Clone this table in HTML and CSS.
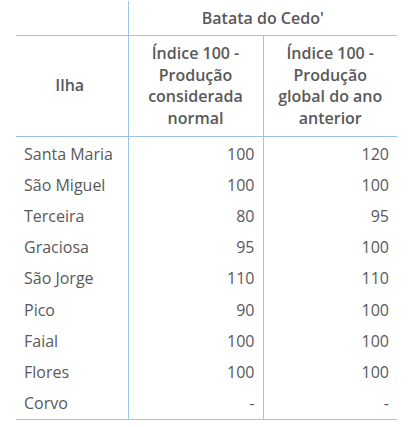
FILE: index.html
```html
<!DOCTYPE html>
<html lang="pt">
<head>
<meta charset="utf-8">
<link rel="stylesheet" href="styles.css">
</head>
<body>
<table class="tbl">
  <colgroup>
    <col class="c1"><col class="c2"><col class="c3">
  </colgroup>
  <thead>
    <tr class="h1">
      <th class="blank"></th>
      <th class="group" colspan="2">Batata do Cedo'</th>
    </tr>
    <tr class="h2">
      <th class="ilha">Ilha</th>
      <th class="sub">Índice 100 -<br>Produção<br>considerada<br>normal</th>
      <th class="sub">Índice 100 -<br>Produção<br>global do ano<br>anterior</th>
    </tr>
  </thead>
  <tbody>
    <tr><td>Santa Maria</td><td class="n">100</td><td class="n">120</td></tr>
    <tr><td>São Miguel</td><td class="n">100</td><td class="n">100</td></tr>
    <tr><td>Terceira</td><td class="n">80</td><td class="n">95</td></tr>
    <tr><td>Graciosa</td><td class="n">95</td><td class="n">100</td></tr>
    <tr><td>São Jorge</td><td class="n">110</td><td class="n">110</td></tr>
    <tr><td>Pico</td><td class="n">90</td><td class="n">100</td></tr>
    <tr><td>Faial</td><td class="n">100</td><td class="n">100</td></tr>
    <tr><td>Flores</td><td class="n">100</td><td class="n">100</td></tr>
    <tr><td>Corvo</td><td class="n">-</td><td class="n">-</td></tr>
  </tbody>
</table>
</body>
</html>
```
FILE: styles.css
```css
html, body {
  margin: 0;
  padding: 0;
  background: #ffffff;
}
body {
  padding: 1px 0 0 16px;
  font-family: "Open Sans", "Noto Sans", sans-serif;
  color: #595959;
}
.tbl {
  border-collapse: collapse;
  table-layout: fixed;
  width: 381px;
}
.c1 { width: 112px; }
.c2 { width: 135px; }
.c3 { width: 134px; }
.tbl th, .tbl td {
  padding: 0 8px;
  font-size: 16px;
}
.tbl th {
  font-weight: 600;
  text-align: center;
  line-height: 21.5px;
}
.h1 th {
  height: 33px;
  border-bottom: 1px solid #9dc3e6;
}
.h1 .group {
  border-left: 1px solid #9dc3e6;
  padding-top: 1px;
}
.h2 th {
  height: 100px;
  border-bottom: 1px solid #9dc3e6;
}
.h2 .sub {
  border-left: 1px solid #9dc3e6;
}
.h2 .ilha {
  padding-right: 12px;
}
.tbl td {
  height: 31.2px;
  line-height: 20px;
  border-left: 1px solid #9dc3e6;
}
.tbl td:first-child {
  border-left: none;
}
.tbl td.n {
  text-align: right;
}
.tbl tbody tr:first-child td {
  padding-top: 1px;
}
.tbl tbody tr:last-child td {
  border-bottom: 1px solid #9dc3e6;
}
```
